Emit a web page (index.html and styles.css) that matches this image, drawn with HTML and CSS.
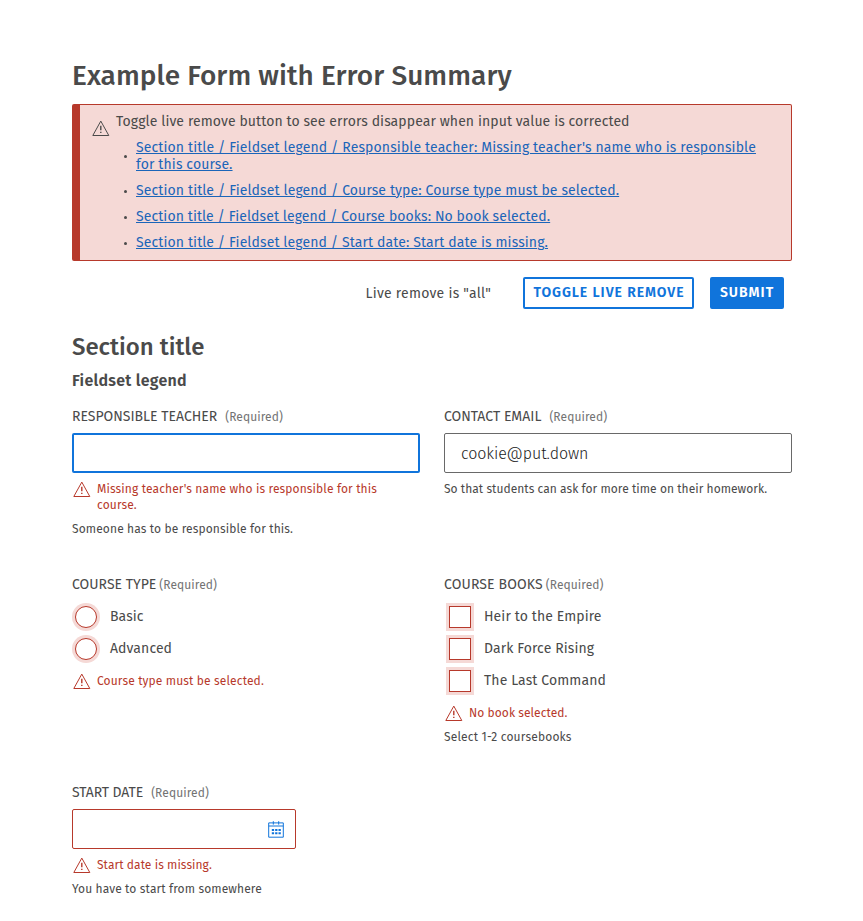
FILE: index.html
```html
<!DOCTYPE html>
<html lang="en">
<head>
<meta charset="utf-8">
<title>Example Form with Error Summary</title>
<link rel="stylesheet" href="styles.css">
</head>
<body>
<svg class="sprite" aria-hidden="true">
  <symbol id="warn" viewBox="0 0 18 16"><path d="M8.8 1.1 16.8 15.5H.8Z"/><path class="bang" d="M8.8 5.8V10.3M8.8 11.8V13"/></symbol>
</svg>
<main>
  <h1>Example Form with Error Summary</h1>
  <section class="alert">
    <svg class="icon"><use href="#warn"/></svg>
    <div class="alert-body">
      <p>Toggle live remove button to see errors disappear when input value is corrected</p>
      <ul>
        <li><a class="l1" href="#teacher">Section title / Fieldset legend / Responsible teacher: Missing teacher's name who is responsible<br>for this course.</a></li>
        <li><a class="l2" href="#type">Section title / Fieldset legend / Course type: Course type must be selected.</a></li>
        <li><a class="l3" href="#books">Section title / Fieldset legend / Course books: No book selected.</a></li>
        <li><a class="l4" href="#date">Section title / Fieldset legend / Start date: Start date is missing.</a></li>
      </ul>
    </div>
  </section>
  <div class="actions">
    <span class="state">Live remove is "all"</span>
    <button class="btn outline" type="button">TOGGLE LIVE REMOVE</button>
    <button class="btn solid" type="button">SUBMIT</button>
  </div>
  <h2>Section title</h2>
  <h3>Fieldset legend</h3>
  <div class="grid">
    <div class="field">
      <div class="label"><label for="teacher">RESPONSIBLE TEACHER</label><span class="req">(Required)</span></div>
      <input id="teacher" class="input focus" type="text">
      <div class="error wide"><svg class="icon"><use href="#warn"/></svg><span>Missing teacher's name who is responsible for this<br>course.</span></div>
      <div class="help">Someone has to be responsible for this.</div>
    </div>
    <div class="field">
      <div class="label"><label for="email">CONTACT EMAIL</label><span class="req">(Required)</span></div>
      <input id="email" class="input" type="text" value="cookie@put.down">
      <div class="help snug">So that students can ask for more time on their homework.</div>
    </div>
    <div class="field" id="type">
      <div class="label tight"><span>COURSE TYPE</span><span class="req">(Required)</span></div>
      <div class="options">
        <label class="option"><span class="radio"></span>Basic</label>
        <label class="option"><span class="radio"></span>Advanced</label>
      </div>
      <div class="error wide"><svg class="icon"><use href="#warn"/></svg><span>Course type must be selected.</span></div>
    </div>
    <div class="field" id="books">
      <div class="label tight books"><span>COURSE BOOKS</span><span class="req">(Required)</span></div>
      <div class="options boxes">
        <label class="option"><span class="check"></span>Heir to the Empire</label>
        <label class="option"><span class="check"></span>Dark Force Rising</label>
        <label class="option"><span class="check"></span>The Last Command</label>
      </div>
      <div class="error"><svg class="icon"><use href="#warn"/></svg><span>No book selected.</span></div>
      <div class="help loose">Select 1-2 coursebooks</div>
    </div>
    <div class="field">
      <div class="label start"><label for="date">START DATE</label><span class="req">(Required)</span></div>
      <div class="input date">
        <input id="date" type="text" aria-label="Start date">
        <svg class="cal" viewBox="0 0 16 18"><path d="M.7 2.9H15.3V17.2H.7ZM.7 6H15.3M5.3 1.2V4.6M10.7 1.2V4.6"/><path class="dots" d="M3.8 10H12.8M3.8 13.3H12.8"/></svg>
      </div>
      <div class="error"><svg class="icon"><use href="#warn"/></svg><span>Start date is missing.</span></div>
      <div class="help">You have to start from somewhere</div>
    </div>
  </div>
</main>
</body>
</html>
```

FILE: styles.css
```css
* { box-sizing: border-box; }
body { margin: 0; background: #fff; color: #4a4a4a; font-family: "Fira Sans", "Noto Sans", sans-serif; font-size: 14px; }
.sprite { display: none; }
main { width: 720px; margin-left: 72px; padding-top: 58px; }
h1, h2, h3, p, ul { margin: 0; padding: 0; font-weight: 500; }
h1 { font-size: 28px; line-height: 36px; margin-bottom: 10px; letter-spacing: .06px; white-space: nowrap; }
.icon { width: 18px; height: 16px; flex: none; fill: none; stroke: currentColor; stroke-width: 1; }
.bang { stroke-width: 1.4; }
.alert { display: flex; height: 157px; border: 1px solid #b7392b; border-left-width: 8px; border-radius: 2px; background: #f5d9d6; padding: 8px 0 0 12px; }
.alert .icon { margin: 7px 6px 0 0; }
.alert-body { white-space: nowrap; }
.alert p { line-height: 17px; font-weight: 400; letter-spacing: .09px; }
.alert ul { list-style: none; margin-top: 9px; display: grid; gap: 9px; font-weight: 400; }
.alert li { display: flex; align-items: center; line-height: 17px; }
.alert li::before { content: ""; width: 3px; height: 3px; border-radius: 50%; background: #4a4a4a; margin: 1px 9px 0 8px; }
.alert a { color: #1b65b9; text-decoration: underline; text-underline-offset: 1px; text-decoration-thickness: 1px; }
.l1 { letter-spacing: .12px; }
.l2 { letter-spacing: .115px; }
.l3 { letter-spacing: .09px; }
.l4 { letter-spacing: .11px; }
.actions { display: flex; justify-content: flex-end; align-items: center; height: 32px; margin: 16px 8px 0 0; }
.state { margin-right: 32px; white-space: nowrap; letter-spacing: .24px; }
.btn { height: 32px; padding: 0 0 1px; border: 2px solid #1074db; border-radius: 2px; font: inherit; font-weight: 600; line-height: 26px; letter-spacing: 1px; white-space: nowrap; }
.outline { width: 171px; padding-left: 1px; background: #fff; color: #1074db; letter-spacing: .93px; }
.solid { width: 74px; margin-left: 16px; background: #1074db; color: #fff; }
h2 { font-size: 24px; line-height: 32px; margin-top: 22px; }
h3 { font-size: 16px; font-weight: 600; line-height: 20px; margin-top: 8px; letter-spacing: .27px; }
.grid { display: grid; grid-template-columns: 348px 348px; grid-template-rows: 168px 208px auto; column-gap: 24px; margin-top: 16px; }
.label { display: flex; gap: 8px; align-items: center; height: 20px; padding-bottom: 2px; margin-bottom: 6px; white-space: nowrap; }
.tight { gap: 3px; }
.books { letter-spacing: .12px; }
.start { letter-spacing: -.08px; }
.req { font-size: 12px; color: #737373; padding-top: 1px; letter-spacing: .08px; }
.input { display: block; width: 348px; height: 40px; border: 1px solid #696969; border-radius: 2px; padding: 0 16px; background: #fff; color: #1a1a1a; font: 300 16px "Fira Sans", "Noto Sans", sans-serif; letter-spacing: -.1px; outline: none; }
.focus { border: 2px solid #1074db; }
.error { display: flex; gap: 6px; margin: 8px 0 8px 1px; color: #b7392b; font-size: 12px; line-height: 16px; letter-spacing: .06px; white-space: nowrap; }
.wide { letter-spacing: .13px; }
.help { font-size: 12px; line-height: 16px; margin-top: 8px; letter-spacing: .12px; white-space: nowrap; }
.snug { letter-spacing: .04px; }
.loose { letter-spacing: .18px; }
.option { display: flex; align-items: center; height: 32px; gap: 13px; line-height: 32px; padding-left: 3px; letter-spacing: .1px; }
.options { margin-bottom: 8px; }
.boxes .option { padding-left: 5px; }
.radio, .check { flex: none; width: 22px; height: 22px; border: 1px solid #b7392b; box-shadow: 0 0 0 3px #f5d9d6; background: #fff; }
.radio { border-radius: 50%; }
.date { display: flex; width: 224px; align-items: center; padding: 0 11px 0 16px; border-color: #b7392b; }
.date input { min-width: 0; flex: 1; border: 0; padding: 0; outline: none; }
.cal { width: 16px; height: 18px; fill: none; stroke: #1074db; stroke-width: 1; }
.dots { stroke-width: 2; stroke-dasharray: 2.3 1.05; }
```
